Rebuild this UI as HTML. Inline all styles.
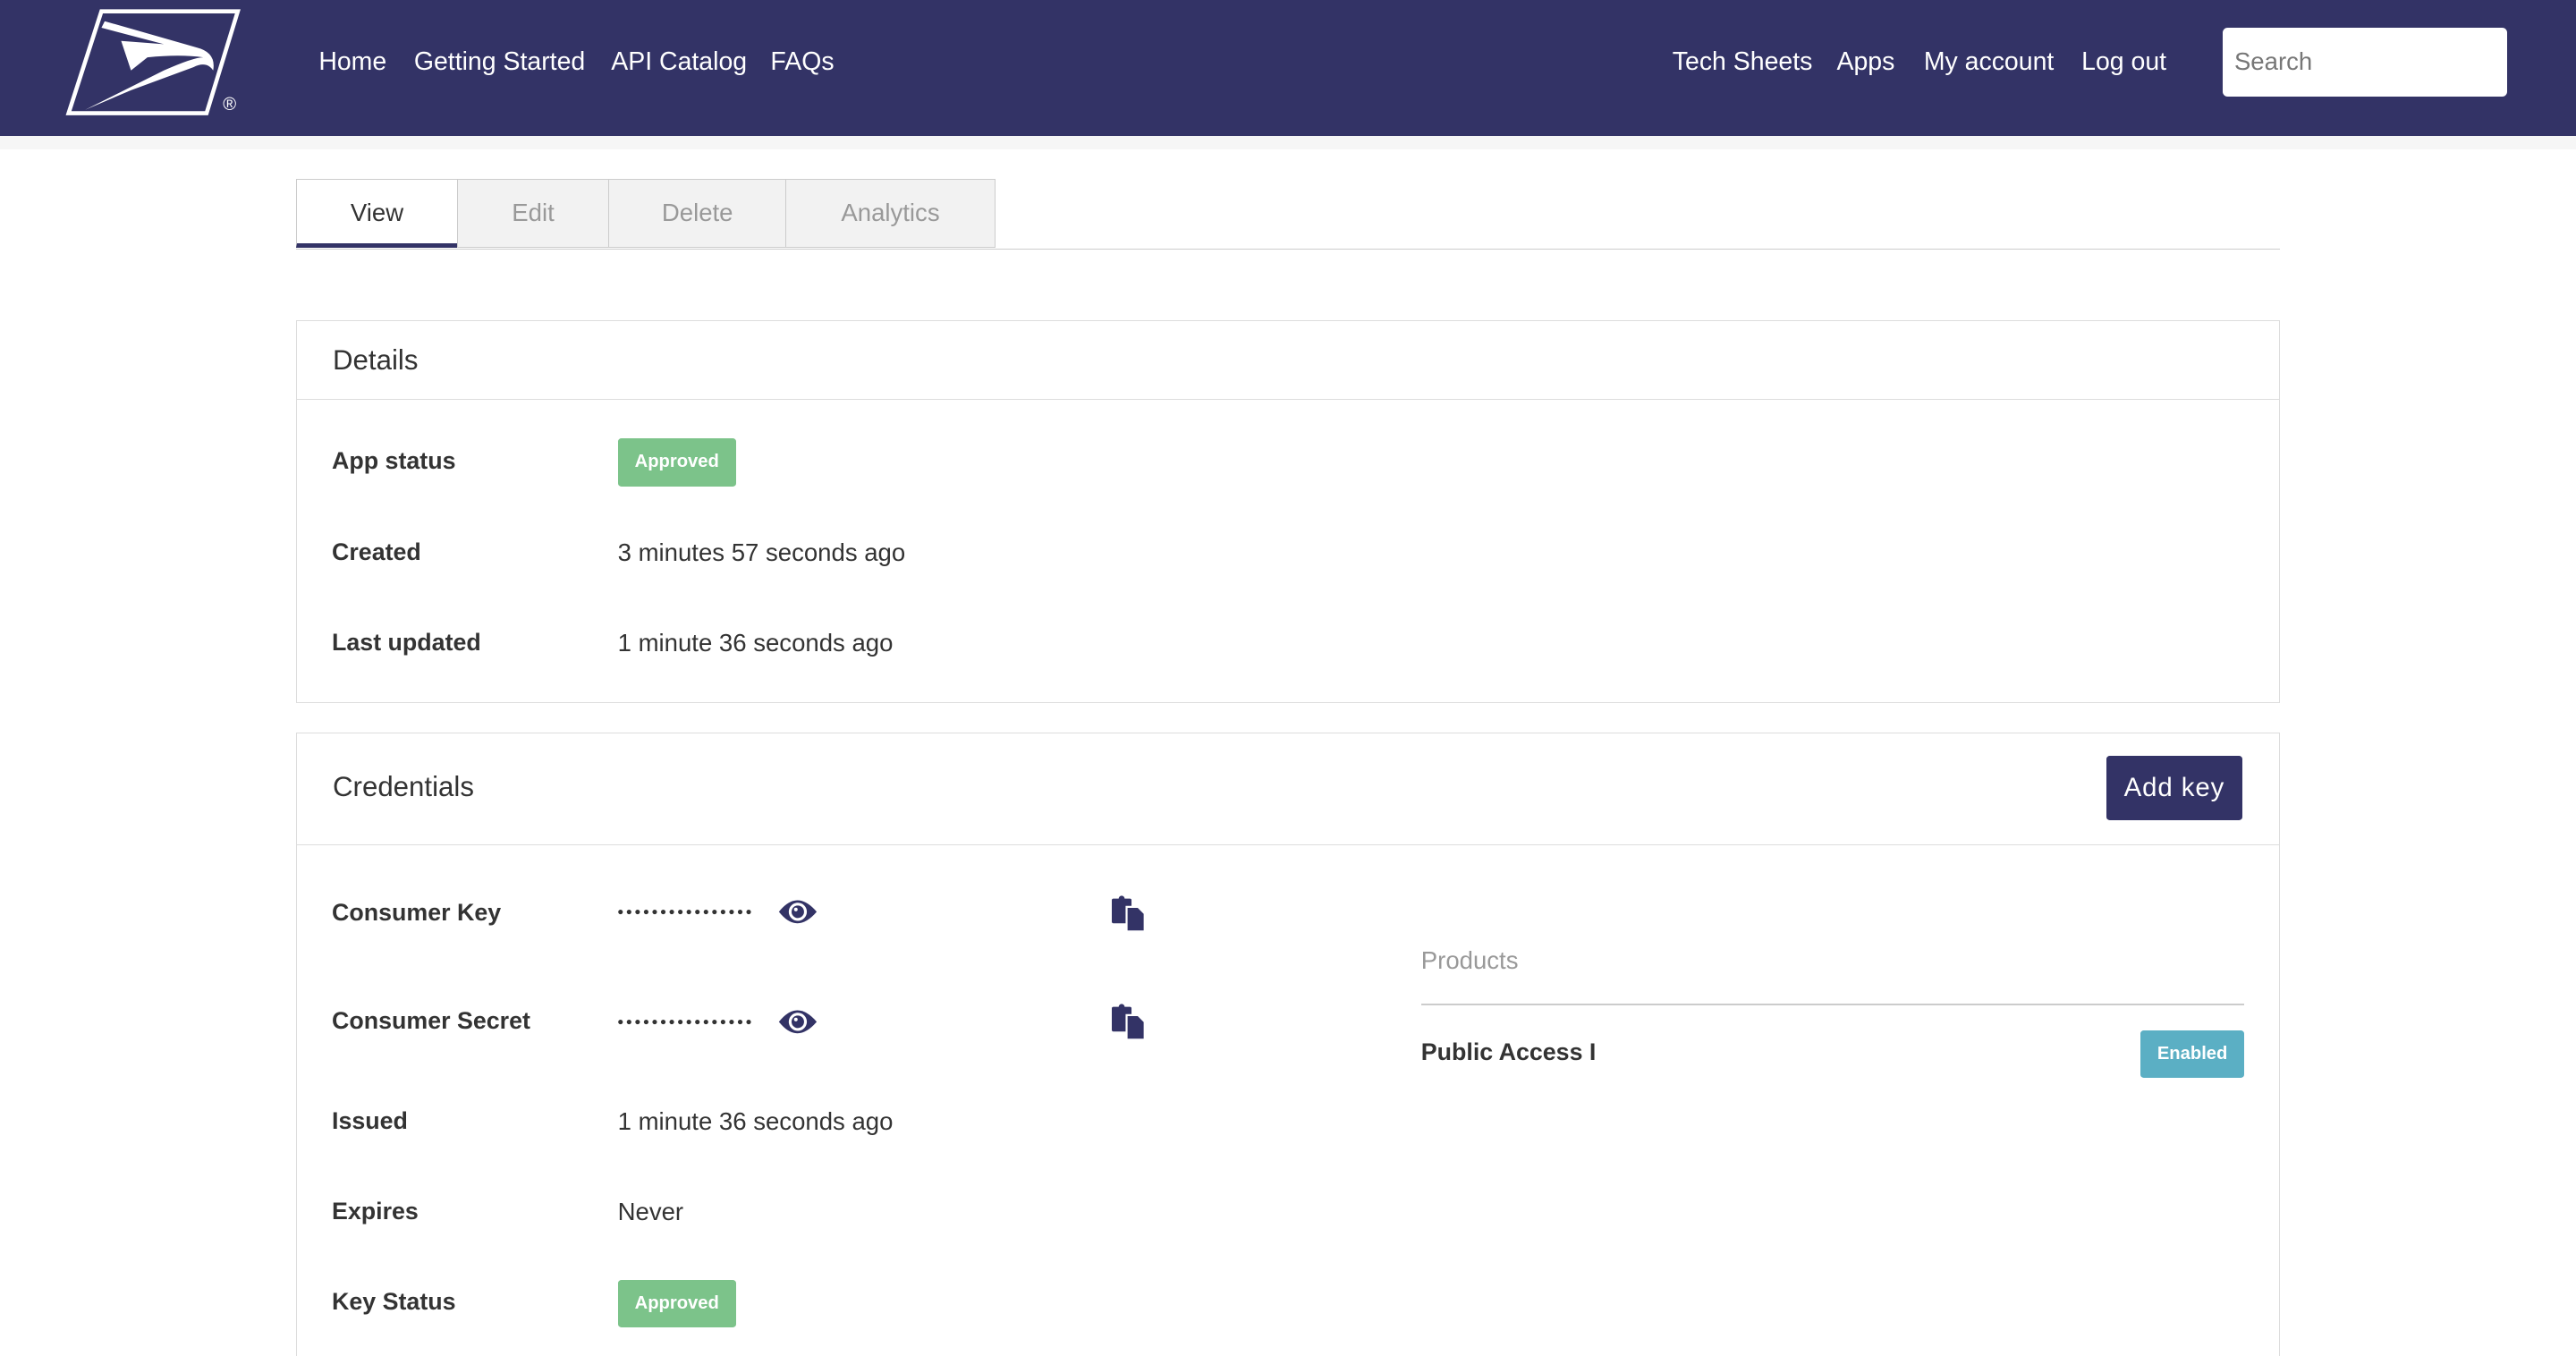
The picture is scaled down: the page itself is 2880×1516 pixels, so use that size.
<!DOCTYPE html>
<html><head><meta charset="utf-8"><style>
*{box-sizing:border-box;margin:0;padding:0}
html,body{width:2880px;height:1516px;overflow:hidden;background:#fff}
#w{zoom:1.836735;width:1568px;height:826px;position:relative;font-family:"Liberation Sans",sans-serif;color:#333}
.hdr{position:absolute;left:0;top:0;width:1568px;height:83px;background:#333366}
.strip{position:absolute;left:0;top:83px;width:1568px;height:8px;background:#f6f6f6}
.nav{position:absolute;top:29px;color:#fff;font-size:15.5px}
.search{position:absolute;left:1353px;top:17px;width:173px;height:42px;background:#fff;border-radius:3px;color:#777;font-size:15px;padding:12px 7px}
.tabs{position:absolute;left:180px;top:109px;height:43px;width:1208px;border-bottom:1px solid #ccc}
.tab{position:absolute;top:0;height:42px;border:1px solid #ccc;background:#f2f2f2;color:#999;font-size:15px;text-align:center;line-height:40px}
.panel{position:absolute;left:180px;width:1208px;border:1px solid #ddd;background:#fff}
.ph{height:48px;border-bottom:1px solid #ddd;font-size:17px;padding:14px 22px;color:#333}
.t{position:absolute;font-size:15px;color:#333}
.b{font-weight:bold;font-size:14.6px}
.badge{position:absolute;background:#7cc38a;color:#fff;font-size:11px;font-weight:bold;height:29px;line-height:29px;width:72px;text-align:center;border-radius:2px}
</style></head><body><div id="w">
<div class="hdr">
<svg style="position:absolute;left:40px;top:5px" width="110" height="66" viewBox="0 0 110 66">
<polygon points="22,2 105,2 86,64 2,64" fill="none" stroke="#fff" stroke-width="2.5"/>
<path d="M24,8 L80,24 Q92,27 90,38 Q86,32 78,36 L40,50 L12,62 L60,38 Q78,30 84,30 Q70,28 50,30 L40,38 L34,20 L60,22 L22,12 Z" fill="#fff"/>
<text x="96" y="62" fill="#fff" font-size="11" font-family="Liberation Sans">®</text>
</svg>
<div class="nav" style="left:194px">Home</div>
<div class="nav" style="left:252px">Getting Started</div>
<div class="nav" style="left:372px">API Catalog</div>
<div class="nav" style="left:469px">FAQs</div>
<div class="nav" style="left:1018px">Tech Sheets</div>
<div class="nav" style="left:1118px">Apps</div>
<div class="nav" style="left:1171px">My account</div>
<div class="nav" style="left:1267px">Log out</div>
<div class="search">Search</div>
</div>
<div class="strip"></div>
<div class="tabs">
<div class="tab" style="left:0;width:99px;background:#fff;color:#333;border-bottom:3px solid #333366">View</div>
<div class="tab" style="left:98px;width:93px">Edit</div>
<div class="tab" style="left:190px;width:109px">Delete</div>
<div class="tab" style="left:298px;width:128px">Analytics</div>
</div>
<div class="panel" style="top:195px;height:233px"><div class="ph">Details</div></div>
<div class="t b" style="left:202px;top:272px">App status</div>
<div class="badge" style="left:376px;top:267px">Approved</div>
<div class="t b" style="left:202px;top:328px">Created</div>
<div class="t" style="left:376px;top:328px">3 minutes 57 seconds ago</div>
<div class="t b" style="left:202px;top:383px">Last updated</div>
<div class="t" style="left:376px;top:383px">1 minute 36 seconds ago</div>
<div class="panel" style="top:446px;height:400px"><div class="ph" style="height:68px;padding-top:23px">Credentials</div></div>
<div style="position:absolute;left:1282px;top:460px;width:83px;height:39px;background:#333366;color:#fff;font-size:16px;text-align:center;line-height:39px;border-radius:2px;letter-spacing:.5px">Add key</div>
<div class="t b" style="left:202px;top:547px">Consumer Key</div>
<div class="t b" style="left:202px;top:613px">Consumer Secret</div>
<svg style="position:absolute;left:376px;top:552px" width="84" height="6"><g fill="#333">
<circle cx="1.5" cy="3" r="1.4"/><circle cx="6.7" cy="3" r="1.4"/><circle cx="11.9" cy="3" r="1.4"/><circle cx="17.1" cy="3" r="1.4"/><circle cx="22.3" cy="3" r="1.4"/><circle cx="27.5" cy="3" r="1.4"/><circle cx="32.7" cy="3" r="1.4"/><circle cx="37.9" cy="3" r="1.4"/><circle cx="43.1" cy="3" r="1.4"/><circle cx="48.3" cy="3" r="1.4"/><circle cx="53.5" cy="3" r="1.4"/><circle cx="58.7" cy="3" r="1.4"/><circle cx="63.9" cy="3" r="1.4"/><circle cx="69.1" cy="3" r="1.4"/><circle cx="74.3" cy="3" r="1.4"/><circle cx="79.5" cy="3" r="1.4"/></g></svg>
<svg style="position:absolute;left:376px;top:619px" width="84" height="6"><g fill="#333">
<circle cx="1.5" cy="3" r="1.4"/><circle cx="6.7" cy="3" r="1.4"/><circle cx="11.9" cy="3" r="1.4"/><circle cx="17.1" cy="3" r="1.4"/><circle cx="22.3" cy="3" r="1.4"/><circle cx="27.5" cy="3" r="1.4"/><circle cx="32.7" cy="3" r="1.4"/><circle cx="37.9" cy="3" r="1.4"/><circle cx="43.1" cy="3" r="1.4"/><circle cx="48.3" cy="3" r="1.4"/><circle cx="53.5" cy="3" r="1.4"/><circle cx="58.7" cy="3" r="1.4"/><circle cx="63.9" cy="3" r="1.4"/><circle cx="69.1" cy="3" r="1.4"/><circle cx="74.3" cy="3" r="1.4"/><circle cx="79.5" cy="3" r="1.4"/></g></svg>
<svg style="position:absolute;left:473px;top:545px" width="25" height="20" viewBox="0 0 25 20"><path d="M1,10 Q12,-4 24,10 Q12,24 1,10Z" fill="#333366"/><circle cx="12.5" cy="10" r="5.5" fill="#fff"/><circle cx="12.5" cy="10" r="3.8" fill="#333366"/><circle cx="11.3" cy="8.6" r="1.1" fill="#fff"/></svg>
<svg style="position:absolute;left:473px;top:612px" width="25" height="20" viewBox="0 0 25 20"><path d="M1,10 Q12,-4 24,10 Q12,24 1,10Z" fill="#333366"/><circle cx="12.5" cy="10" r="5.5" fill="#fff"/><circle cx="12.5" cy="10" r="3.8" fill="#333366"/><circle cx="11.3" cy="8.6" r="1.1" fill="#fff"/></svg>
<svg style="position:absolute;left:677px;top:545px" width="20" height="22" viewBox="0 0 20 22"><rect x="0" y="2" width="12" height="15" rx="1" fill="#333366"/><circle cx="6" cy="2" r="1.8" fill="#333366"/><path d="M9,7 H16 L20,11 V22 H9Z" fill="#333366" stroke="#fff" stroke-width="1.2"/></svg>
<svg style="position:absolute;left:677px;top:611px" width="20" height="22" viewBox="0 0 20 22"><rect x="0" y="2" width="12" height="15" rx="1" fill="#333366"/><circle cx="6" cy="2" r="1.8" fill="#333366"/><path d="M9,7 H16 L20,11 V22 H9Z" fill="#333366" stroke="#fff" stroke-width="1.2"/></svg>
<div class="t b" style="left:202px;top:674px">Issued</div>
<div class="t" style="left:376px;top:674px">1 minute 36 seconds ago</div>
<div class="t b" style="left:202px;top:729px">Expires</div>
<div class="t" style="left:376px;top:729px">Never</div>
<div class="t b" style="left:202px;top:784px">Key Status</div>
<div class="badge" style="left:376px;top:779px">Approved</div>
<div class="t" style="left:865px;top:576px;color:#999">Products</div>
<div style="position:absolute;left:865px;top:611px;width:501px;height:1px;background:#ccc"></div>
<div class="t b" style="left:865px;top:632px">Public Access I</div>
<div class="badge" style="left:1303px;top:627px;width:63px;background:#5bafc4">Enabled</div>
</div></body></html>
